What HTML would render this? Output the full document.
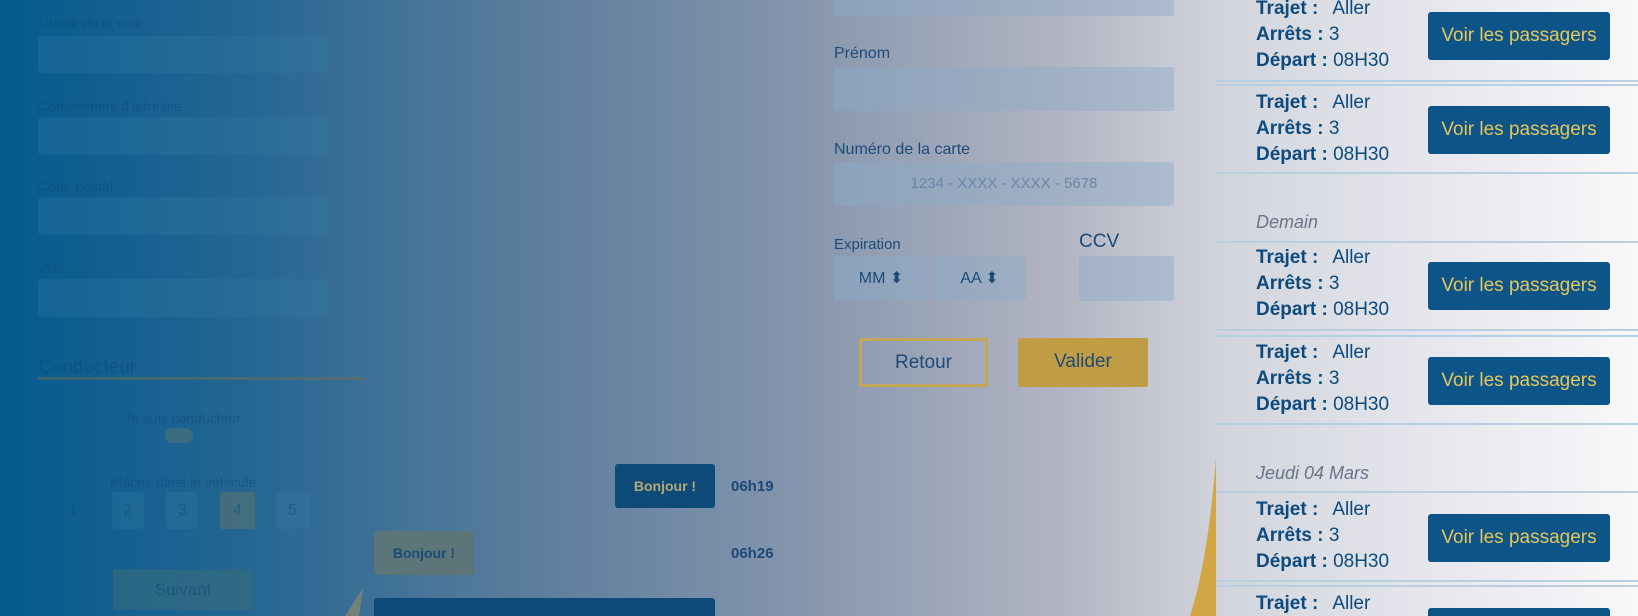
<!DOCTYPE html>
<html style="width:1638px;height:616px;overflow:hidden"><head><meta charset="utf-8"><style>
*{margin:0;padding:0;box-sizing:border-box}
body{width:1638px;height:616px;overflow:hidden;font-family:"Liberation Sans",sans-serif}
#w{position:relative;width:1638px;height:616px;overflow:hidden;
background:linear-gradient(90deg,#055a8e 0%,#246693 15%,#557a9a 30%,#8394ac 48%,#b3b5c3 65%,#d3d5dd 75%,#e6e8ee 88%,#f8f8f9 100%)}
.a{position:absolute}
.lbl{position:absolute;font-size:14px;color:rgba(10,70,120,.45);line-height:16px}
.inp{position:absolute;background:rgba(60,130,170,.22);border-radius:3px}
.mi{position:absolute;background:rgba(140,170,200,.45);border-radius:3px}
.ml{position:absolute;font-size:16px;color:#1d4a78;line-height:18px}
.rt{position:absolute;left:1256px;color:#0d4a7d;font-size:19px;line-height:26px}
.rt b{font-weight:bold}
.rt span{margin-left:14px}
.btn{position:absolute;left:1428px;width:182px;height:48px;background:#0d5589;border-radius:3px;color:#e6c65a;font-size:19px;text-align:center;line-height:48px}
.ln{position:absolute;left:1216px;right:0;height:2px;background:#b9cfe0}
.day{position:absolute;left:1256px;font-style:italic;color:#6a7488;font-size:18px;line-height:20px}
</style></head><body><div id="w">
<div class="lbl" style="left:38px;top:15px">Libellé de la voie</div>
<div class="inp" style="left:38px;top:36px;width:290px;height:37px"></div>
<div class="lbl" style="left:38px;top:98px">Complément d'adresse</div>
<div class="inp" style="left:38px;top:117px;width:290px;height:38px"></div>
<div class="lbl" style="left:38px;top:178px">Code postal</div>
<div class="inp" style="left:38px;top:197px;width:290px;height:38px"></div>
<div class="lbl" style="left:38px;top:260px">Ville</div>
<div class="inp" style="left:38px;top:279px;width:290px;height:38px"></div>
<div class="lbl" style="left:38px;top:357px;font-size:19px;line-height:22px">Conducteur</div>
<div class="a" style="left:38px;top:377px;width:326px;height:3px;background:rgba(110,110,80,.5)"></div>
<div class="lbl" style="left:124px;top:410px">Je suis conducteur</div>
<div class="a" style="left:165px;top:428px;width:28px;height:15px;border-radius:8px;background:rgba(90,120,110,.5)"></div>
<div class="lbl" style="left:110px;top:474px">Places dans le véhicule</div>
<div class="lbl" style="left:68px;top:503px;font-size:16px">1</div>
<div class="inp" style="left:112px;top:492px;width:32px;height:37px"></div><div class="lbl" style="left:123px;top:503px;font-size:16px">2</div>
<div class="inp" style="left:166px;top:492px;width:32px;height:37px"></div><div class="lbl" style="left:178px;top:503px;font-size:16px">3</div>
<div class="a" style="left:220px;top:492px;width:35px;height:37px;background:rgba(90,115,110,.6);border-radius:2px"></div><div class="lbl" style="left:233px;top:503px;font-size:16px">4</div>
<div class="inp" style="left:276px;top:492px;width:34px;height:37px"></div><div class="lbl" style="left:288px;top:503px;font-size:16px">5</div>
<div class="a" style="left:113px;top:569px;width:140px;height:41px;background:rgba(60,110,120,.5);border-radius:2px;color:rgba(10,70,120,.5);text-align:center;line-height:41px;font-size:17px">Suivant</div>

<div class="a" style="left:615px;top:464px;width:100px;height:44px;background:#0d4a78;border-radius:3px;color:#b5a978;font-weight:bold;font-size:14px;text-align:center;line-height:44px">Bonjour !</div>
<div class="a" style="left:731px;top:478px;font-weight:bold;color:#1a4a78;font-size:15px">06h19</div>
<div class="a" style="left:374px;top:531px;width:100px;height:44px;background:#5b7579;border-radius:3px;color:#1a4a78;font-weight:bold;font-size:14px;text-align:center;line-height:44px">Bonjour !</div>
<div class="a" style="left:731px;top:545px;font-weight:bold;color:#1a4a78;font-size:15px">06h26</div>
<div class="a" style="left:374px;top:598px;width:341px;height:30px;background:#0d4a78;border-radius:3px"></div>
<svg class="a" style="left:345px;top:588px" width="20" height="28"><path d="M18 0 L14 28 L0 28 Z" fill="#8a8a6a" opacity=".7"/></svg>

<div class="mi" style="left:834px;top:0;width:340px;height:16px"></div>
<div class="ml" style="left:834px;top:45px">Prénom</div>
<div class="mi" style="left:834px;top:67px;width:340px;height:44px"></div>
<div class="ml" style="left:834px;top:141px">Numéro de la carte</div>
<div class="mi" style="left:834px;top:162px;width:340px;height:44px;text-align:center;line-height:44px;color:#6a86a8;font-size:15px">1234 - XXXX - XXXX - 5678</div>
<div class="ml" style="left:834px;top:236px;font-size:15px">Expiration</div>
<div class="ml" style="left:1079px;top:231px;font-size:19px;line-height:22px">CCV</div>
<div class="mi" style="left:834px;top:256px;width:94px;height:45px;text-align:center;line-height:45px;color:#1d4a78;font-size:16px">MM ⬍</div>
<div class="mi" style="left:933px;top:256px;width:93px;height:45px;text-align:center;line-height:45px;color:#1d4a78;font-size:16px">AA ⬍</div>
<div class="mi" style="left:1079px;top:256px;width:95px;height:45px"></div>
<div class="a" style="left:859px;top:338px;width:129px;height:49px;border:3px solid #c2a757;border-radius:2px;color:#1d4a78;font-size:19px;text-align:center;line-height:43px">Retour</div>
<div class="a" style="left:1018px;top:338px;width:130px;height:49px;background:#c09d44;border-radius:2px;color:#1d4a78;font-size:19px;text-align:center;line-height:47px">Valider</div>

<svg class="a" style="left:1160px;top:450px" width="60" height="166"><path d="M56 8 Q48 110 30 166 L56 166 Z" fill="#d2a545"/></svg>

<div class="rt" style="top:-4px"><b>Trajet :</b><span>Aller</span><br><b>Arrêts :</b> 3<br><b>Départ :</b> 08H30</div>
<div class="btn" style="top:12px">Voir les passagers</div>
<div class="ln" style="top:80px"></div><div class="ln" style="top:84px"></div>
<div class="rt" style="top:90px"><b>Trajet :</b><span>Aller</span><br><b>Arrêts :</b> 3<br><b>Départ :</b> 08H30</div>
<div class="btn" style="top:106px">Voir les passagers</div>
<div class="ln" style="top:172px"></div>
<div class="day" style="top:212px">Demain</div>
<div class="ln" style="top:241px"></div>
<div class="rt" style="top:245px"><b>Trajet :</b><span>Aller</span><br><b>Arrêts :</b> 3<br><b>Départ :</b> 08H30</div>
<div class="btn" style="top:262px">Voir les passagers</div>
<div class="ln" style="top:329px"></div><div class="ln" style="top:335px"></div>
<div class="rt" style="top:340px"><b>Trajet :</b><span>Aller</span><br><b>Arrêts :</b> 3<br><b>Départ :</b> 08H30</div>
<div class="btn" style="top:357px">Voir les passagers</div>
<div class="ln" style="top:423px"></div>
<div class="day" style="top:463px">Jeudi 04 Mars</div>
<div class="ln" style="top:491px"></div>
<div class="rt" style="top:497px"><b>Trajet :</b><span>Aller</span><br><b>Arrêts :</b> 3<br><b>Départ :</b> 08H30</div>
<div class="btn" style="top:514px">Voir les passagers</div>
<div class="ln" style="top:580px"></div><div class="ln" style="top:585px"></div>
<div class="rt" style="top:591px"><b>Trajet :</b><span>Aller</span></div>
<div class="btn" style="top:608px">Voir les passagers</div>
</div></body></html>
